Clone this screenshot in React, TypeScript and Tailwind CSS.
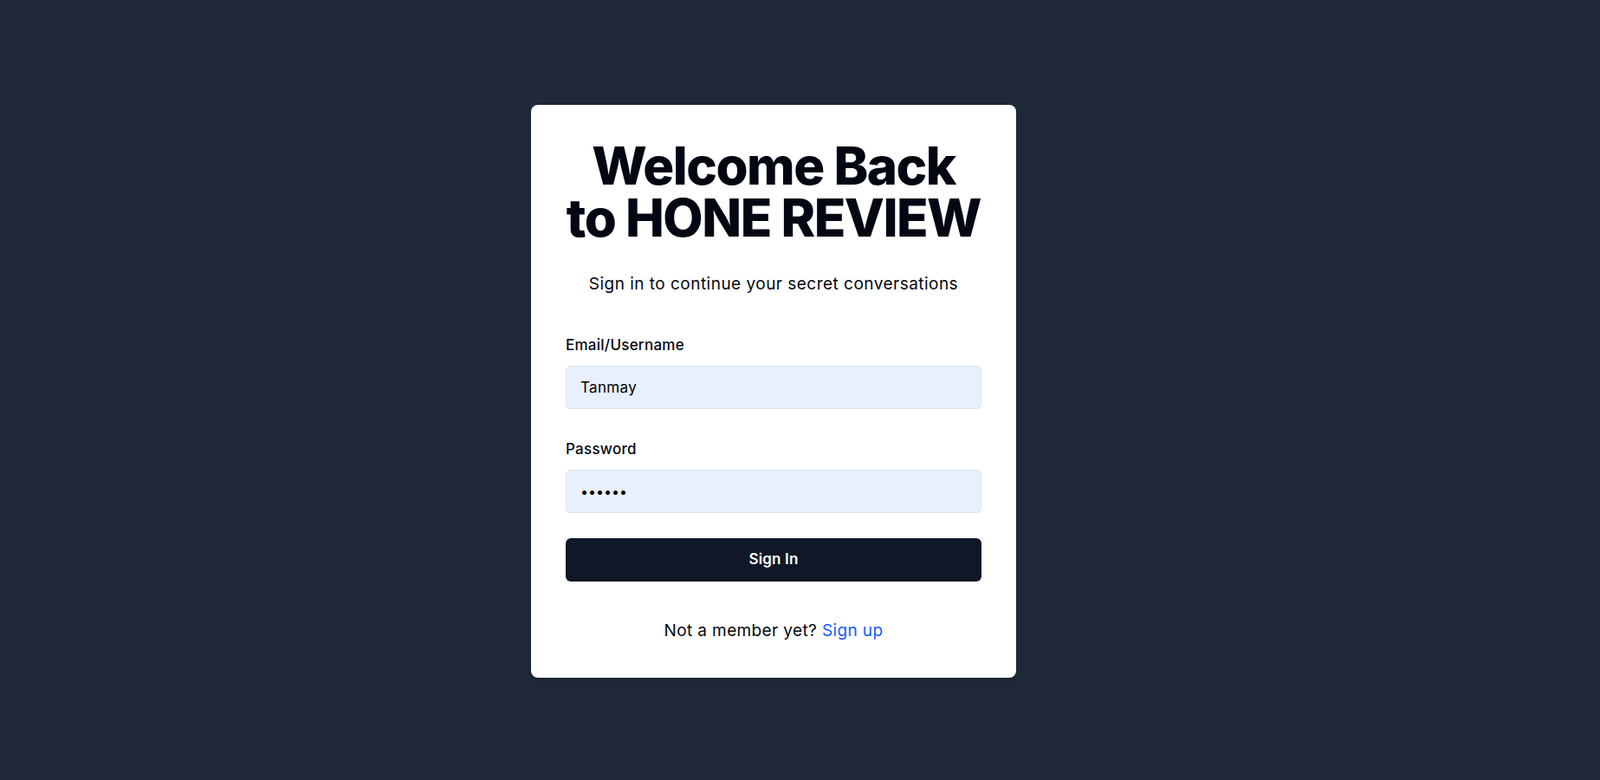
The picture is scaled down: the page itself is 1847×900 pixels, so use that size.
import React from "react";

export default function App() {
  return (
    <div
      className="min-h-screen w-full bg-[#1f2937] flex items-center justify-center pr-[61px] pt-0.5"
      style={{ fontFamily: "Inter, 'Noto Sans', sans-serif" }}
    >
      <div className="w-[560px] bg-white rounded-lg shadow-md px-10 pt-10 pb-10">
        <h1 className="text-center text-[60px] leading-[60px] font-extrabold tracking-tight text-[#030712]">
          Welcome Back
          <br />
          to HONE REVIEW
        </h1>
        <p className="mt-[33px] text-center text-[19px] tracking-[0.025em] leading-7 text-[#030712]">
          Sign in to continue your secret conversations
        </p>
        <form className="mt-[44px]" onSubmit={(e) => e.preventDefault()}>
          <label className="block text-[17px] tracking-[0.015em] leading-6 font-medium text-[#030712]">
            Email/Username
          </label>
          <input
            type="text"
            defaultValue="Tanmay"
            className="mt-3 block w-full h-[50px] rounded-md border border-[#dbe3ef] bg-[#e8f0fe] px-4 text-[17px] tracking-[0.02em] text-black outline-none"
          />
          <label className="mt-[34px] block text-[17px] tracking-[0.015em] leading-6 font-medium text-[#030712]">
            Password
          </label>
          <input
            type="password"
            defaultValue="tanmay"
            className="mt-3 block w-full h-[50px] rounded-md border border-[#dbe3ef] bg-[#e8f0fe] px-4 text-base text-black outline-none"
          />
          <button
            type="submit"
            className="mt-[29px] block w-full h-[50px] rounded-md bg-[#101828] text-white text-[17px] tracking-[0.01em] font-semibold"
          >
            Sign In
          </button>
        </form>
        <p className="mt-[43px] text-center text-[19px] tracking-[0.02em] leading-7 text-[#030712]">
          Not a member yet? <a href="#" className="text-blue-600">Sign up</a>
        </p>
      </div>
    </div>
  );
}
